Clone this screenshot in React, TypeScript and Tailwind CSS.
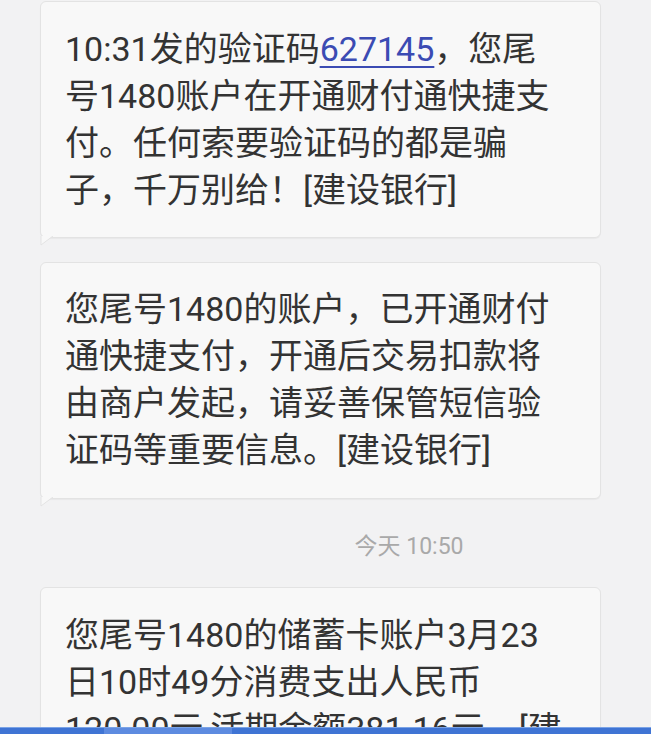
import React from "react";

const font = { fontFamily: 'Roboto, "Noto Sans CJK SC", "Noto Sans", sans-serif' };

function Bubble({ lines, className = "" }: { lines: React.ReactNode[]; className?: string }) {
  return (
    <div className={`relative mx-[40px] w-[561px] rounded-[6px] border border-[#e3e3e3] bg-[#f8f8f8] px-[24px] shadow-[0_1px_1px_rgba(0,0,0,0.04)] ${className}`}>
      {lines.map((l, i) => (
        <div key={i} className="whitespace-nowrap text-[34px] leading-[47px] text-[#333333]">
          {l}
        </div>
      ))}
      <svg className="absolute -bottom-[9px] -left-[1px]" width="14" height="10" viewBox="0 0 14 10">
        <path d="M1 0 L1 9 L13 0" fill="#f8f8f8" stroke="#e3e3e3" strokeWidth="1" />
      </svg>
    </div>
  );
}

export default function App() {
  return (
    <div style={font} className="flex h-[734px] w-[651px] flex-col overflow-hidden bg-[#f2f2f3]">
      <div className="flex-1 overflow-hidden pt-[1px]">
        <Bubble
          className="pt-[24px] pb-[23px]"
          lines={[
            <>
              10:31发的验证码<span className="text-[#3b4bb3] underline decoration-[2px] underline-offset-[5px]">627145</span>，您尾
            </>,
            "号1480账户在开通财付通快捷支",
            "付。任何索要验证码的都是骗",
            "子，千万别给！[建设银行]",
          ]}
        />
        <Bubble
          className="mt-[24px] pt-[23px] pb-[24px]"
          lines={[
            "您尾号1480的账户，已开通财付",
            "通快捷支付，开通后交易扣款将",
            "由商户发起，请妥善保管短信验",
            "证码等重要信息。[建设银行]",
          ]}
        />
        <div className="flex justify-center pl-[167px] pt-[33px] pb-[26px] text-[23px] leading-[29px] text-[#a9a9a9]">
          今天 10:50
        </div>
        <Bubble
          className="pt-[24px] pb-[22px]"
          lines={[
            "您尾号1480的储蓄卡账户3月23",
            "日10时49分消费支出人民币",
            "120.00元,活期余额381.16元。[建",
            "设银行]",
          ]}
        />
      </div>
      <div className="flex h-[7px] border-t border-[#7aa3e6] bg-[#3f74d4]">
        <div className="ml-[104px] w-[128px] bg-[#5d8be0]" />
      </div>
    </div>
  );
}
